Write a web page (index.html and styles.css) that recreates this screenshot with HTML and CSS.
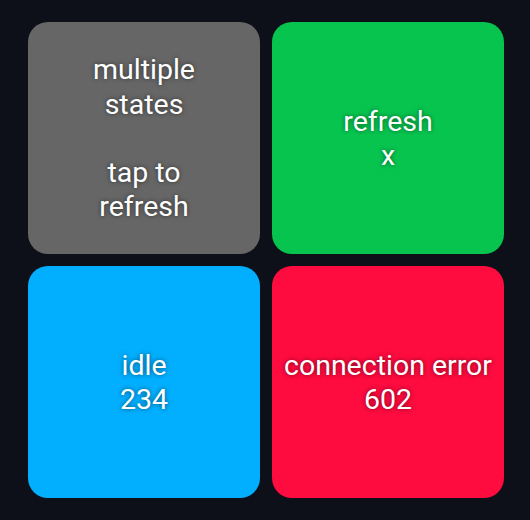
FILE: index.html
```html
<!DOCTYPE html>
<html>
<head>
<meta charset="utf-8">
<link rel="stylesheet" href="styles.css">
</head>
<body>
<div class="grid">
  <div class="tile tile-gray"><span class="label">multiple<br>states<br><br>tap to<br>refresh</span></div>
  <div class="tile tile-green"><span class="label">refresh<br>x</span></div>
  <div class="tile tile-blue"><span class="label">idle<br>234</span></div>
  <div class="tile tile-red"><span class="label">connection error<br>602</span></div>
</div>
</body>
</html>
```
FILE: styles.css
```css
html, body {
  margin: 0;
  padding: 0;
  background: #0d1019;
}
body {
  width: 530px;
  height: 520px;
  font-family: Roboto, "Noto Sans", sans-serif;
}
.grid {
  display: grid;
  grid-template-columns: 232px 232px;
  grid-auto-rows: 232px;
  gap: 12px;
  padding: 22px 0 0 28px;
}
.tile {
  border-radius: 20px;
  display: flex;
  align-items: center;
  justify-content: center;
  text-align: center;
}
.label {
  color: #fff;
  font-size: 28.5px;
  line-height: 34.2px;
  padding-top: 2px;
  text-shadow: 0 0 4px rgba(0,0,0,0.55);
}
.tile-gray { background: #666666; }
.tile-green { background: #07c44f; }
.tile-blue { background: #02aefe; }
.tile-red { background: #fe0b3f; }
```
